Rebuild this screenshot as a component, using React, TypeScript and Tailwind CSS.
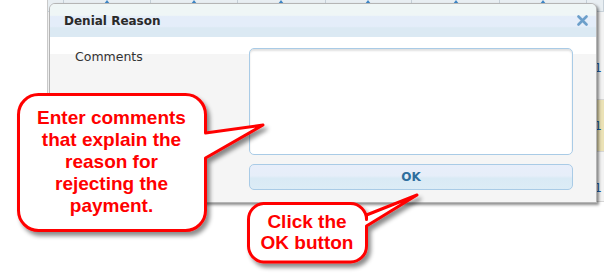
import React from 'react';

const HEADER_CELLS = [16, 87, 87, 88, 87, 88, 87, 17];

function CloseIcon() {
  return (
    <svg width="11" height="11" viewBox="0 0 11 11">
      <path d="M1.5 1.5 L9.5 9.5 M9.5 1.5 L1.5 9.5" stroke="#6c9fca" strokeWidth="2.6" strokeLinecap="round" />
    </svg>
  );
}

function Callouts() {
  return (
    <svg className="absolute inset-0" width="604" height="276" viewBox="0 0 604 276">
      <defs>
        <filter id="shade" x="-10%" y="-10%" width="130%" height="130%">
          <feDropShadow dx="3" dy="4" stdDeviation="2" floodColor="#000" floodOpacity="0.45" />
        </filter>
      </defs>
      <path
        d="M38.5 94.5 H185.5 A20 20 0 0 1 205.5 114.5 V133 L263 125 L205.5 158 V210.5 A20 20 0 0 1 185.5 230.5 H38.5 A20 20 0 0 1 18.5 210.5 V114.5 A20 20 0 0 1 38.5 94.5 Z"
        fill="#fff"
        stroke="#ff0000"
        strokeWidth="3"
        strokeLinejoin="round"
        filter="url(#shade)"
      />
      <path
        d="M263.5 203.5 H350.5 A16 16 0 0 1 366.5 219.5 V215 L417 195 L366.5 226 V246 A16 16 0 0 1 350.5 262 H263.5 A16 16 0 0 1 248.5 246 V219.5 A16 16 0 0 1 263.5 203.5 Z"
        fill="#fff"
        stroke="#ff0000"
        strokeWidth="3"
        strokeLinejoin="round"
        filter="url(#shade)"
      />
    </svg>
  );
}

export default function App() {
  return (
    <div className="relative w-[604px] h-[276px] bg-white overflow-hidden font-['DejaVu_Sans',sans-serif]">
      {/* table behind the dialog */}
      <div className="ml-[47px] w-[557px] border-l border-[#c9c9c9]">
        <div className="flex h-[12px] bg-[#e8eef2] border-b border-[#c9d3da]">
          {HEADER_CELLS.map((w, i) => (
            <div key={i} style={{ width: w }} className="relative border-r border-[#c6d0d8] flex justify-center">
              {i > 0 && i < 7 && (
                <div className="w-0 h-0 border-l-[3px] border-r-[3px] border-b-[4px] border-l-transparent border-r-transparent border-b-[#3d86c6]" />
              )}
            </div>
          ))}
        </div>
        <div className="h-[88px] bg-[#f3f3f3] border-b border-[#d6d6d6] flex items-end justify-end pr-[2px] pb-[22px] text-[12px] text-[#1f5fa8]">1</div>
        <div className="h-[52px] bg-[#ebe2b6] border-b border-[#d6d6d6] flex items-center justify-end pr-[2px] text-[12px] text-[#1f5fa8]">1</div>
        <div className="h-[50px] bg-[#f3f3f3] border-b border-[#d6d6d6] flex items-end justify-end pr-[2px] pb-[4px] text-[12px] text-[#1f5fa8]">1</div>
      </div>

      {/* dialog */}
      <div className="absolute left-[49px] top-[3px] w-[548px] h-[200px] flex flex-col rounded-t-[6px] border border-[#b5b5b5] bg-[#f5f5f5] shadow-[2px_2px_3px_rgba(0,0,0,0.45)] overflow-hidden">
        <div className="h-[33px] flex items-center justify-between pl-[14px] pr-[8px] bg-[linear-gradient(to_bottom,#eff6f6_0%,#eff6f6_34%,#e4edf9_38%,#e4edf9_68%,#dbe9f3_72%,#dbe9f3_100%)]">
          <span className="text-[12px] font-bold text-[#2a2a2a]">Denial Reason</span>
          <CloseIcon />
        </div>
        <div className="flex-1 flex bg-[linear-gradient(to_bottom,#ffffff_0,#ffffff_17px,#f5f5f5_17px)]">
          <div className="w-[199px] pl-[25px] pt-[12px] text-[12.5px] text-[#333] leading-[15px]">Comments</div>
          <div className="w-[324px] pt-[11px] flex flex-col gap-[9px]">
            <div className="h-[107px] rounded-[5px] border border-[#a9cbe6] bg-white shadow-[inset_0_2px_2px_rgba(0,0,0,0.12)]" />
            <button className="h-[26px] rounded-[5px] border border-[#a9cbe6] bg-[linear-gradient(to_bottom,#e8eefa_0%,#e6eef9_45%,#d9eaf5_55%,#dcecf6_100%)] text-[12px] font-bold text-[#2e6e9e]">
              OK
            </button>
          </div>
        </div>
      </div>

      {/* annotations */}
      <Callouts />
      <div className="absolute left-[17px] top-[107px] w-[189px] text-center font-['Liberation_Sans',Arial,sans-serif] font-bold text-[19px] leading-[22px] text-[#ff0000]">
        Enter comments<br />that explain the<br />reason for<br />rejecting the<br />payment.
      </div>
      <div className="absolute left-[247px] top-[211px] w-[120px] text-center font-['Liberation_Sans',Arial,sans-serif] font-bold text-[19px] leading-[21px] text-[#ff0000]">
        Click the<br />OK button
      </div>
    </div>
  );
}
